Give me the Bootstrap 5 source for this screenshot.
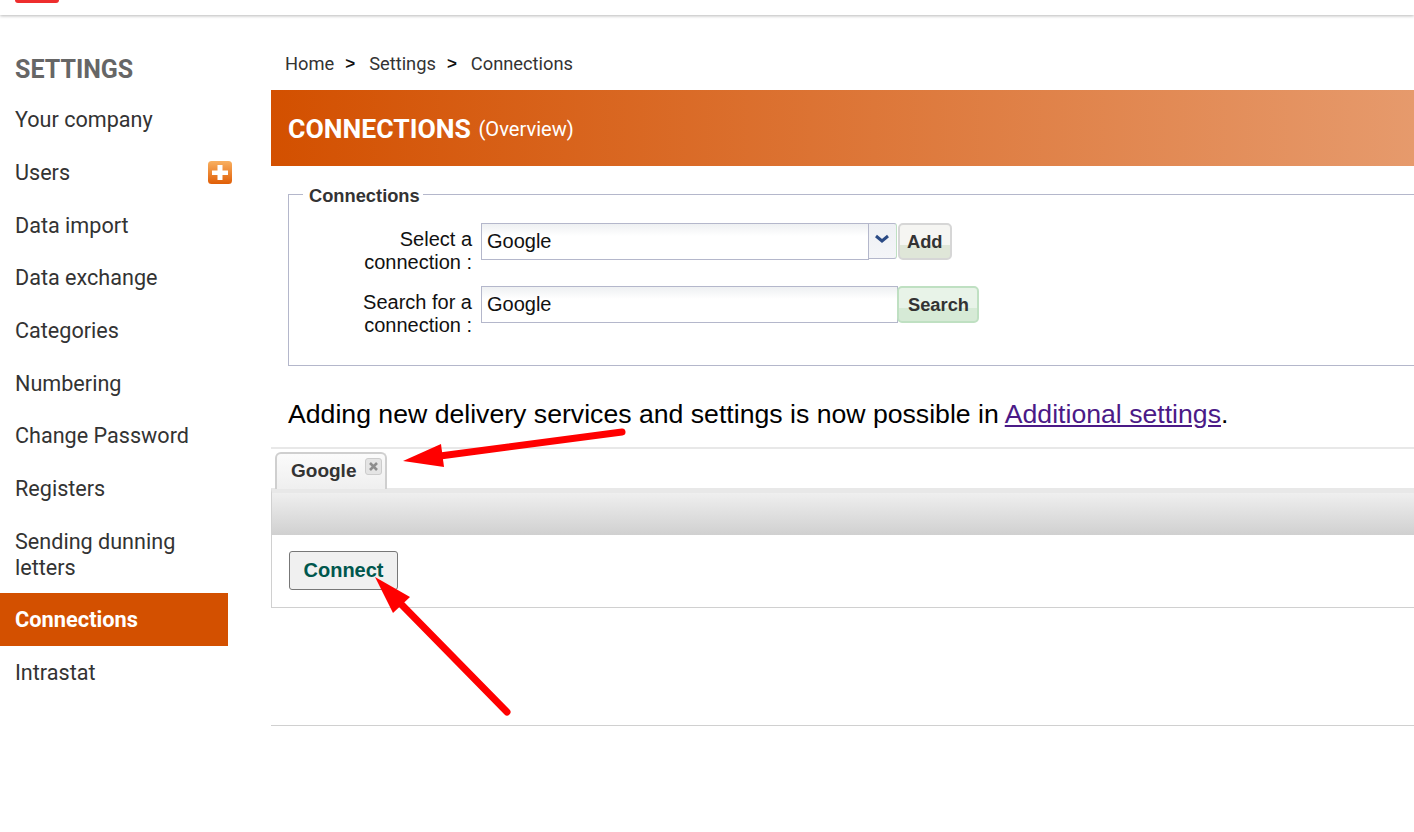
<!DOCTYPE html>
<html lang="en">
<head>
<meta charset="utf-8">
<title>Connections</title>
<link href="https://cdn.jsdelivr.net/npm/bootstrap@5.3.0/dist/css/bootstrap.min.css" rel="stylesheet">
<style>
html,body{height:832px;overflow:hidden;background:#fff}
body{font-family:Roboto,sans-serif;color:#333;position:relative}
.topstrip{height:15px;background:#fff;box-shadow:0 1px 3px rgba(0,0,0,.28);position:relative}
.logo-bit{position:absolute;left:15px;top:0;width:44px;height:3px;background:#ee2d2d;border-radius:0 0 3px 3px}
.shell{display:flex}
.sidenav{width:228px;flex:none;padding-top:39px}
.side-title{font-size:25px;font-weight:700;color:#666;padding-left:15px;line-height:32px;margin-bottom:9px;height:31px}
.side-link{display:flex;justify-content:space-between;align-items:center;padding:13.35px 0 13.35px 15px;font-size:21.6px;line-height:26px;color:#333;text-decoration:none}
.side-link.on{background:#d35000;color:#fff;font-weight:700;margin:-1px 0 1px;font-size:21.8px}
.plus-ico{margin-right:-5px}
.mainwrap{margin-left:43px;flex:1;min-width:0}
.crumbs{height:75px;padding:37px 0 0 14px;font-size:18.3px;line-height:24px;color:#333;display:flex}
.crumbs span.sep{margin:0 14px 0 11px;font-family:"Liberation Sans",sans-serif;color:#111;font-weight:700;font-size:17px}
.banner{height:76px;background:linear-gradient(90deg,#d35000,#e69a6c);color:#fff;display:flex;align-items:center;padding:2px 0 0 17px}
.banner b{font-size:26.6px}
.banner span{font-size:20.1px;margin-left:7.500px}
.legacy{font-family:"Liberation Sans",Arial,sans-serif}
.fs-box{margin:28px 0 0 17px;border:1px solid #b4b7cb;border-right:0;height:172px;width:1126px;padding:28px 0 0 0;position:relative}
.fs-leg{position:absolute;left:14px;top:-9px;background:#fff;padding:0 3px 0 6px;font-size:18.3px;font-weight:700;line-height:20px;color:#333;width:auto;margin:0;float:none}
.frow{display:flex;align-items:flex-start;margin-bottom:26px;height:37px}
.flab{width:183px;text-align:right;font-size:20px;line-height:23px;color:#111;padding-top:5px;flex:none}
.fin{margin-left:9px;height:37px;border:1px solid #b4b7cb;background:linear-gradient(#eef0f2,#fff 12px);font-size:20px;line-height:34px;padding-left:5px;color:#111}
.w1{width:388px;border-right:0}
.w2{width:417px}
.ddbtn{width:29px;height:36px;border:1px solid #b4b7cb;border-right-color:#bfe0c2;background:linear-gradient(#eef0f4,#f4f5f8);display:flex;align-items:center;justify-content:center;border-radius:0 3px 3px 0;padding:0 2px 4px 0}
.gbtn{height:37px;border:2px solid #d6d6d6;border-radius:5px;font-size:18.300px;font-weight:700;color:#333;line-height:33px;background:linear-gradient(#f5f5f2 0 60%,#dfe6d8 60%);padding:0 7px;margin-left:1px}
.gbtn.sr{border-color:#bfe0c2;background:linear-gradient(#e8f3e8 0 60%,#d6ead6 60%);padding:0 8px 0 9px;margin-left:-1px}
.ddgap{margin-left:-1px}
.note{margin:31px 0 0 17px;font-size:26.65px;line-height:34px;color:#000;height:37px;white-space:nowrap}
.note a{color:#4b1a87}
.tabzone{border-top:2px solid #e8e8e8;margin-top:13px;height:43px;padding:3px 0 0 4px}
.tabb{width:112px;height:37px;border:2px solid #cfcfcf;border-bottom:0;border-radius:6px 6px 0 0;background:linear-gradient(#fbfbfb,#efefef);font-size:19px;font-weight:700;color:#333;padding:4px 0 0 14px;line-height:26px;position:relative}
.xbox{position:absolute;left:88px;top:4px;width:17px;height:17px;background:#e4e4e4;border:1px solid #ccc;border-radius:3px;display:flex;align-items:center;justify-content:center}
.tabpanel{border:1px solid #d0d0d0;border-right:0;height:120px;margin-top:-2px;background:#fff;border-top:5px solid #e8e8e8}
.barx{height:42px;background:linear-gradient(#efefef,#d0d0d0)}
.cbtn{margin:16px 0 0 17px;width:109px;height:39px;border:1px solid #777;border-radius:3px;background:#f0f0f0;color:#00574d;font-size:20px;font-weight:700;line-height:36px;text-align:center}
.endline{border-top:1px solid #d0d0d0;margin-top:117px}
.arrows{position:absolute;inset:0;width:1414px;height:832px;pointer-events:none}
</style>
</head>
<body>
<div class="topstrip"><div class="logo-bit"></div></div>
<div class="shell">
  <nav class="sidenav">
    <div class="side-title">SETTINGS</div>
    <a class="side-link" href="#">Your company</a>
    <a class="side-link" href="#">Users
      <svg class="plus-ico" width="26" height="26" viewBox="0 0 26 26"><defs><linearGradient id="pg" x1="0" y1="0" x2="0" y2="1"><stop offset="0" stop-color="#f9b060"/><stop offset="1" stop-color="#e05e06"/></linearGradient></defs><rect x="1" y="1" width="24" height="23" rx="3.5" fill="url(#pg)"/><path d="M10.5 5h5v5.500H21v4.500h-5.500v5h-5v-5H5v-4.500h5.500z" fill="#fff"/></svg>
    </a>
    <a class="side-link" href="#">Data import</a>
    <a class="side-link" href="#">Data exchange</a>
    <a class="side-link" href="#">Categories</a>
    <a class="side-link" href="#">Numbering</a>
    <a class="side-link" href="#">Change Password</a>
    <a class="side-link" href="#">Registers</a>
    <a class="side-link" href="#">Sending dunning<br>letters</a>
    <a class="side-link on" href="#">Connections</a>
    <a class="side-link" href="#">Intrastat</a>
  </nav>
  <main class="mainwrap">
    <div class="crumbs"><span>Home</span><span class="sep">&gt;</span><span>Settings</span><span class="sep">&gt;</span><span>Connections</span></div>
    <div class="banner"><b>CONNECTIONS</b><span>(Overview)</span></div>
    <div class="legacy">
      <div class="fs-box">
        <div class="fs-leg">Connections</div>
        <div class="frow">
          <div class="flab">Select a<br>connection :</div>
          <div class="fin w1">Google</div>
          <div class="ddbtn ddgap"><svg width="16" height="10" viewBox="0 0 16 10"><path d="M2 2l6 5 6-5" fill="none" stroke="#2a4a85" stroke-width="3"/></svg></div>
          <div class="gbtn">Add</div>
        </div>
        <div class="frow">
          <div class="flab">Search for a<br>connection :</div>
          <div class="fin w2">Google</div>
          <div class="gbtn sr">Search</div>
        </div>
      </div>
      <div class="note">Adding new delivery services and settings is now possible in <a href="#">Additional settings</a>.</div>
      <div class="tabzone">
        <div class="tabb">Google<span class="xbox"><svg width="11" height="11" viewBox="0 0 11 11"><path d="M2 2l7 7M9 2l-7 7" stroke="#8d8d8d" stroke-width="2.6"/></svg></span></div>
      </div>
      <div class="tabpanel">
        <div class="barx"></div>
        <div class="cbtn">Connect</div>
      </div>
      <div class="endline"></div>
    </div>
  </main>
</div>
<svg class="arrows" viewBox="0 0 1414 832">
  <path d="M622 432L440 456" stroke="#f00" stroke-width="7" stroke-linecap="round" fill="none"/>
  <path d="M403 461L441 444L444 467Z" fill="#f00"/>
  <path d="M507 712L402 605" stroke="#f00" stroke-width="7" stroke-linecap="round" fill="none"/>
  <path d="M375 577L410 597L393 613Z" fill="#f00"/>
</svg>
<script src="https://cdn.jsdelivr.net/npm/bootstrap@5.3.0/dist/js/bootstrap.bundle.min.js"></script>
</body>
</html>
